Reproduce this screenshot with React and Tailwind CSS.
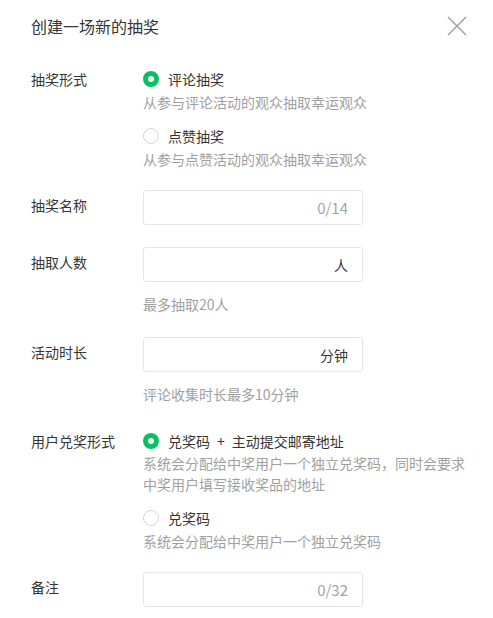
import React, { useState } from 'react';

const font = { fontFamily: '"Noto Sans CJK SC", "Noto Sans", sans-serif' };

function Radio({ checked, onClick, label }) {
  return (
    <button type="button" onClick={onClick} className="flex items-center h-[22px] text-left whitespace-nowrap">
      {checked ? (
        <span className="w-4 h-4 rounded-full bg-[#07c160] flex items-center justify-center shrink-0">
          <span className="w-[6px] h-[6px] rounded-full bg-white" />
        </span>
      ) : (
        <span className="w-4 h-4 rounded-full border border-[#d5d5d5] bg-white shrink-0" />
      )}
      <span className="ml-[9px] text-[14px] text-[#353535]">{label}</span>
    </button>
  );
}

function Field({ suffix, muted }) {
  return (
    <div className="w-[220px] h-[35px] border border-[#e5e5e5] rounded-[3px] flex items-center justify-end pr-[14px]">
      <span className={muted ? 'text-[15px] text-[#a3a3a3]' : 'text-[14px] text-[#353535]'}>{suffix}</span>
    </div>
  );
}

function Row({ label, children, className = '' }) {
  return (
    <div className={`flex ${className}`}>
      <div className="w-[112px] shrink-0 text-[14px] leading-[22px] text-[#353535]">{label}</div>
      <div className="flex-1 whitespace-nowrap">{children}</div>
    </div>
  );
}

export default function App() {
  const [mode, setMode] = useState('comment');
  const [prize, setPrize] = useState('address');

  return (
    <div className="w-[493px] h-[618px] bg-white px-[31px] pt-[14px] leading-[22px]" style={font}>
      <div className="flex items-center justify-between h-6">
        <h1 className="text-[16px] text-[#353535] font-normal">创建一场新的抽奖</h1>
        <button type="button" className="mr-[-5px] w-[20px] h-[20px] flex items-center justify-center">
          <svg width="20" height="20" viewBox="0 0 20 20">
            <path d="M1 1 L19 19 M19 1 L1 19" stroke="#9c9c9c" strokeWidth="1.4" fill="none" />
          </svg>
        </button>
      </div>

      <Row label="抽奖形式" className="mt-[30px]">
        <Radio checked={mode === 'comment'} onClick={() => setMode('comment')} label="评论抽奖" />
        <p className="text-[14px] text-[#a0a0a0] mt-[1px]">从参与评论活动的观众抽取幸运观众</p>
        <div className="mt-[12px]">
          <Radio checked={mode === 'like'} onClick={() => setMode('like')} label="点赞抽奖" />
        </div>
        <p className="text-[14px] text-[#a0a0a0] mt-[1px]">从参与点赞活动的观众抽取幸运观众</p>
      </Row>

      <Row label={<div className="pt-[4px]">抽奖名称</div>} className="mt-[20px]">
        <Field suffix="0/14" muted />
      </Row>

      <Row label={<div className="pt-[4px]">抽取人数</div>} className="mt-[22px]">
        <Field suffix="人" />
        <p className="text-[14px] text-[#a0a0a0] mt-[11px]">最多抽取20人</p>
      </Row>

      <Row label={<div className="pt-[4px]">活动时长</div>} className="mt-[22px]">
        <Field suffix="分钟" />
        <p className="text-[14px] text-[#a0a0a0] mt-[11px]">评论收集时长最多10分钟</p>
      </Row>

      <Row label="用户兑奖形式" className="mt-[25px]">
        <Radio
          checked={prize === 'address'}
          onClick={() => setPrize('address')}
          label={'兑奖码\u2002+\u2002主动提交邮寄地址'}
        />
        <p className="text-[14px] text-[#a0a0a0] mt-[1px] leading-[21px]">
          系统会分配给中奖用户一个独立兑奖码，同时会要求
          <br />
          中奖用户填写接收奖品的地址
        </p>
        <div className="mt-[12px]">
          <Radio checked={prize === 'code'} onClick={() => setPrize('code')} label="兑奖码" />
        </div>
        <p className="text-[14px] text-[#a0a0a0] mt-[1px]">系统会分配给中奖用户一个独立兑奖码</p>
      </Row>

      <Row label={<div className="pt-[4px]">备注</div>} className="mt-[20px]">
        <Field suffix="0/32" muted />
      </Row>
    </div>
  );
}
